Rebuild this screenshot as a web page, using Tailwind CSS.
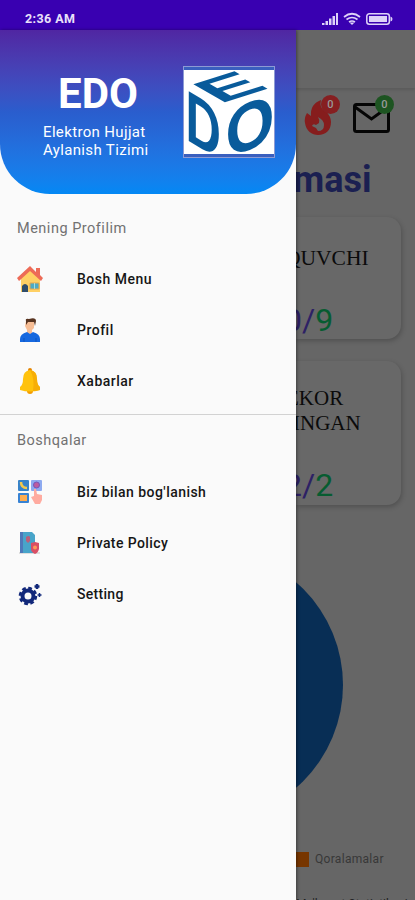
<!DOCTYPE html>
<html lang="uz">
<head>
<meta charset="utf-8">
<title>EDO</title>
<script src="https://cdn.jsdelivr.net/npm/@tailwindcss/browser@4"></script>
</head>
<body class="font-['Roboto',sans-serif]">
<div class="relative w-[415px] h-[900px] overflow-hidden bg-[#666]">
  <!-- Status bar -->
  <header class="h-[30px] bg-[#3900b1] flex justify-between pl-[25px] pr-[22px] pt-[11px]">
    <span class="text-[12.5px] leading-[16px] font-bold text-[#e9e0fa] tracking-[0.4px]">2:36 AM</span>
    <svg class="mt-[1px]" width="71" height="14" viewBox="0 0 71 14" fill="#ded2f8">
      <path d="M0 11h2.500v2H0zM3.500 9h2.500v4H3.500zM7 6.500h2.500V13H7zM10.500 4h2.500v9h-2.500zM14 1h2v12h-2z"/>
      <g fill="none" stroke="#ded2f8" stroke-width="1.700"><path d="M22 5q8-6.500 16 0M24.500 7.500q5.500-4 11 0M27 10q3-2 6 0"/></g><path d="M27.500 10.500h5L30 13z"/>
      <rect x="44.800" y="1.800" width="22.500" height="10.400" rx="2.500" fill="none" stroke="#ded2f8" stroke-width="1.500"/><rect x="47" y="4" width="18" height="6"/><path d="M68.500 4.500q2 .5 2 2.500t-2 2.500z"/>
    </svg>
  </header>

  <!-- Dimmed page behind the drawer -->
  <main class="ml-[296px] w-[119px]">
    <div class="h-[58px] shadow-[0_2px_3px_rgba(0,0,0,0.12)]"></div>
    <div class="flex h-[52px] pt-[6px] pl-[8px]">
      <div class="relative w-[48px]">
        <svg class="mt-[6px]" width="28" height="35" viewBox="0 0 28 35"><path fill="#861d1d" d="M17 0Q6 4 7 16L3 13Q0 18 1 23C2 31 8 35 14 35C22 35 27 30 27 22C27 17 24 13 21 11Q15 8 17 0Z"/><path fill="#666" d="M14 17Q20 20 20 25Q20 31 14 31L12 28L8 26Q9 23 12 25L15 23Q16 20 14 17Z"/></svg>
        <span class="absolute left-[17px] top-[1px] size-[19px] rounded-full bg-[#861f21] text-[#999] text-[11px] leading-[19px] text-center font-medium">0</span>
      </div>
      <div class="relative w-[44px]">
        <svg class="mt-[9px]" width="40" height="32" viewBox="0 0 40 32" fill="none" stroke="#050505" stroke-width="3"><rect x="2.500" y="1.500" width="34" height="27" rx="2"/><path d="M3 4l16.500 12L36 4"/></svg>
        <span class="absolute left-[23px] top-[1px] size-[19px] rounded-full bg-[#1d5421] text-[#999] text-[11px] leading-[19px] text-center font-medium">0</span>
      </div>
    </div>
    <h1 class="h-[77px] pt-[20px] text-[36px] leading-[40px] font-bold text-[#1b2051] -ml-[3px]">masi</h1>
    <section class="w-[105px] h-[122px] rounded-r-[14px] bg-[#686868] shadow-[1px_2px_5px_rgba(0,0,0,0.22)] overflow-hidden">
      <p class="h-[84px] pt-[29px] -ml-[11px] font-['Liberation_Serif',serif] text-[21.5px] leading-[25px] text-[#0b0b0b] whitespace-nowrap">QUVCHI</p>
      <p class="-ml-[12px] text-[32px] leading-[38px] text-[#2d2165]">0/<span class="text-[#075c31]">9</span></p>
    </section>
    <section class="mt-[22px] w-[105px] h-[144px] rounded-r-[14px] bg-[#686868] shadow-[1px_2px_5px_rgba(0,0,0,0.22)] overflow-hidden">
      <p class="h-[105px] pt-[25px] -ml-[10px] font-['Liberation_Serif',serif] text-[21px] leading-[25px] text-[#0b0b0b] whitespace-nowrap">EKOR<br><span class="pl-[7px]">INGAN</span></p>
      <p class="-ml-[12px] text-[32px] leading-[38px] text-[#2d2165]">2/<span class="text-[#075c31]">2</span></p>
    </section>
    <svg class="mt-[44px]" width="119" height="272" viewBox="0 0 119 272"><circle cx="-89" cy="136" r="136" fill="#082e55"/></svg>
    <div class="mt-[30px] flex items-center gap-[6px]">
      <span class="w-[13px] h-[15px] bg-[#773600]"></span><span class="text-[12px] leading-[16px] text-[#383838] tracking-[0.3px]">Qoralamalar</span>
    </div>
    <p class="mt-[30px] text-[12px] leading-[14px] text-[#222] whitespace-nowrap">Ma'lumot Statistikasi</p>
  </main>

  <!-- Navigation drawer -->
  <aside class="absolute left-0 top-[30px] w-[296px] h-[870px] bg-[#fafafa] shadow-[1px_0_3px_rgba(0,0,0,0.4)]">
    <div class="h-[164px] rounded-b-[50px] bg-linear-to-b from-[#5026a2] via-[#2a5dcd] to-[#0388f4] flex text-white">
      <div class="w-[183px] pt-[42px] pl-[43px]">
        <h2 class="pl-[15px] text-[42px] leading-[44px] font-bold">EDO</h2>
        <p class="pt-[7px] text-[15px] leading-[18px] whitespace-nowrap tracking-[0.35px]">Elektron Hujjat<br>Aylanish Tizimi</p>
      </div>
      <svg class="mt-[36px]" width="92" height="92" viewBox="0 0 92 92" font-family="'Liberation Sans',sans-serif" font-weight="700" font-size="100" fill="#095b9b">
        <rect x=".5" y=".5" width="91" height="91" fill="#3a5fbe" stroke="#8d9bd4"/>
        <rect x="1" y="4" width="90" height="84" fill="#fff"/>
        <text transform="matrix(.76 -.24 .457 .26 36.700 37.700)">E</text>
        <text transform="matrix(.49 .3 0 .725 2.600 73)">D</text>
        <text transform="matrix(.63 -.25 0 .68 42.400 93)">O</text>
      </svg>
    </div>
    <nav class="text-[14px] leading-[20px] text-[#161616] font-medium tracking-[0.5px]">
      <h3 class="h-[59px] pt-[25px] pl-[17px] font-normal text-[#717171] text-[14.500px]">Mening Profilim</h3>
      <a class="flex items-center h-[51px] pl-[17px] gap-[34px]">
        <svg width="26" height="26" viewBox="0 0 26 26"><path fill="#ffd064" d="M4 12l9-9 10 9v14H4z"/><path fill="#ed6b57" d="M13 0L0 12l2 3L13 5l11 10 2-3-3-3V2h-4v4z"/><path fill="#304d6b" d="M5 26v-6q3-4 6 0v6z"/><path fill="#4eabc5" stroke="#e6a74d" d="M13 17h9v6h-9z"/><path stroke="#a6ddde" d="M17.500 17v6"/></svg>
        <span>Bosh Menu</span>
      </a>
      <a class="flex items-center h-[51px] pl-[17px] gap-[34px]">
        <svg width="26" height="26" viewBox="0 0 26 26"><path fill="#f7bd94" d="M9 4h8v7l-2 2v4l-2 2-3-2v-4L8 9z"/><path fill="#57331f" d="M9 8V4Q8 1 12 2q7-2 7 2l-1 5-1-4h-6z"/><path fill="#1668df" d="M3 25v-3q0-5 7-7l3 2 3-2q7 2 7 7v3z"/><path stroke="#0c53bf" d="M7 21v4M19 21v4"/></svg>
        <span>Profil</span>
      </a>
      <a class="flex items-center h-[51px] pl-[17px] gap-[34px]">
        <svg width="26" height="26" viewBox="0 0 26 26"><circle cx="13" cy="2" r="2" fill="#e58600"/><circle cx="13" cy="23" r="3" fill="#f49d00"/><path fill="#ffc20c" d="M13 2q7 1 7 9 0 6 3 8v3q-10 3-20 0v-3q3-2 3-8 0-8 7-9z"/><path fill="#f7ae06" d="M13 2q7 1 7 9 0 6 3 8v3q-4 1-7 1 2-12-3-21z"/></svg>
        <span>Xabarlar</span>
      </a>
      <h3 class="h-[60px] mt-[8px] pt-[16px] pl-[17px] border-t border-[#d2d2d2] font-normal text-[#717171] text-[14.500px]">Boshqalar</h3>
      <a class="flex items-center h-[51px] pl-[17px] gap-[34px] -mt-[8px]">
        <svg width="26" height="26" viewBox="0 0 26 26"><rect x="1" y="1" width="11" height="11" rx="1" fill="#3883c9"/><path d="M4 3q0 6 6 6" fill="none" stroke="#f5c94b" stroke-width="2.500"/><rect x="14" y="1" width="11" height="11" rx="1" fill="#8eaaf0"/><circle cx="19.500" cy="6" r="3" fill="#bd5b9f" stroke="#7655b8"/><rect x="1" y="14" width="11" height="10" rx="1" fill="#3883d4"/><path fill="#ffad51" d="M3 16h7v6H3z"/><path fill="#ffaba0" d="M17 10h2l1 5 5 1v5l-2 4h-5l-4-7 3-1z"/></svg>
        <span class="tracking-[0.45px]">Biz bilan bog'lanish</span>
      </a>
      <a class="flex items-center h-[51px] pl-[17px] gap-[34px]">
        <svg width="26" height="26" viewBox="0 0 26 26"><path fill="#dedede" d="M2 22h21v2H2z"/><path fill="#48a4c9" d="M3 2h12l3 3v18H3z"/><path fill="#4e78b9" d="M3 2h3v21H3z"/><path fill="#b85f7b" d="M9 7q3-2 4 0v4l-2 2-2-2z"/><path fill="#d94f65" d="M14 13l4-1 4 1v6q-1 4-4 5-4-2-4-5z"/><circle cx="18" cy="17.500" r="2" fill="#ff985a"/></svg>
        <span class="tracking-[0.4px]">Private Policy</span>
      </a>
      <a class="flex items-center h-[51px] pl-[17px] gap-[34px]">
        <svg width="26" height="26" viewBox="0 0 26 26"><g stroke="#12287a" fill="none"><circle cx="11" cy="15" r="5.500" stroke-width="4"/><circle cx="11" cy="15" r="8" stroke-width="2.500" stroke-dasharray="3.800 2.483"/><path stroke-width="2.500" d="M20 3v5M17.500 5.500h5"/><path stroke-width="1.500" d="M22.500 12v4M20.500 14h4"/></g></svg>
        <span class="tracking-[0.3px]">Setting</span>
      </a>
    </nav>
  </aside>
</div>
</body>
</html>
